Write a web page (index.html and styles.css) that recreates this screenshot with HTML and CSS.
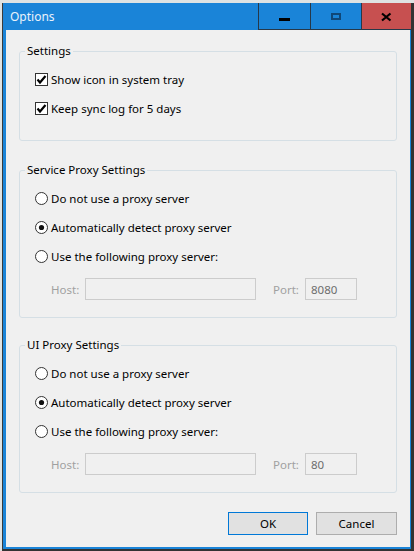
FILE: index.html
```html
<!DOCTYPE html>
<html lang="en">
<head>
    <meta charset="UTF-8">
    <meta name="viewport" content="width=device-width, initial-scale=1.0">
    <title>Options</title>
    <link rel="stylesheet" href="styles.css">
</head>
<body>
    <div class="window">
        <div class="titlebar">
            <span class="title">Options</span>
            <div class="caption-buttons">
                <span class="cap-btn cap-min">
                    <svg width="51" height="26" viewBox="0 0 51 26"><rect x="20" y="15" width="11" height="3" fill="#000"/></svg>
                </span>
                <span class="cap-btn cap-max">
                    <svg width="50" height="26" viewBox="0 0 50 26"><rect x="21" y="11" width="8" height="5" fill="none" stroke="#0f4778" stroke-width="2"/></svg>
                </span>
                <span class="cap-btn cap-close">
                    <svg width="49" height="26" viewBox="0 0 49 26"><path d="M20 10.5 L28.5 17.5 M28.5 10.5 L20 17.5" stroke="#000" stroke-width="2.2"/></svg>
                </span>
            </div>
        </div>

        <div class="client">
            <fieldset class="group">
                <legend>Settings</legend>
                <label class="option">
                    <span class="check"><svg width="13" height="13" viewBox="0 0 13 13"><rect x="0.5" y="0.5" width="12" height="12" fill="#fff" stroke="#333"/><path d="M2.5 6.5 L5 9.5 L10.5 3" fill="none" stroke="#000" stroke-width="2.2"/></svg></span>
                    Show icon in system tray
                </label>
                <label class="option">
                    <span class="check"><svg width="13" height="13" viewBox="0 0 13 13"><rect x="0.5" y="0.5" width="12" height="12" fill="#fff" stroke="#333"/><path d="M2.5 6.5 L5 9.5 L10.5 3" fill="none" stroke="#000" stroke-width="2.2"/></svg></span>
                    Keep sync log for 5 days
                </label>
            </fieldset>

            <fieldset class="group proxy">
                <legend>Service Proxy Settings</legend>
                <label class="option">
                    <span class="radio"><svg width="13" height="13" viewBox="0 0 13 13"><circle cx="6.5" cy="6.5" r="6" fill="#fff" stroke="#333"/></svg></span>
                    Do not use a proxy server
                </label>
                <label class="option">
                    <span class="radio"><svg width="13" height="13" viewBox="0 0 13 13"><circle cx="6.5" cy="6.5" r="6" fill="#fff" stroke="#333"/><circle cx="6.5" cy="6.5" r="2.6" fill="#111"/></svg></span>
                    Automatically detect proxy server
                </label>
                <label class="option">
                    <span class="radio"><svg width="13" height="13" viewBox="0 0 13 13"><circle cx="6.5" cy="6.5" r="6" fill="#fff" stroke="#333"/></svg></span>
                    Use the following proxy server:
                </label>
                <div class="host-row">
                    <span class="field-label">Host:</span>
                    <input class="field host" type="text" value="" disabled>
                    <span class="field-label port-label">Port:</span>
                    <input class="field port" type="text" value="8080" disabled>
                </div>
            </fieldset>

            <fieldset class="group proxy ui-proxy">
                <legend>UI Proxy Settings</legend>
                <label class="option">
                    <span class="radio"><svg width="13" height="13" viewBox="0 0 13 13"><circle cx="6.5" cy="6.5" r="6" fill="#fff" stroke="#333"/></svg></span>
                    Do not use a proxy server
                </label>
                <label class="option">
                    <span class="radio"><svg width="13" height="13" viewBox="0 0 13 13"><circle cx="6.5" cy="6.5" r="6" fill="#fff" stroke="#333"/><circle cx="6.5" cy="6.5" r="2.6" fill="#111"/></svg></span>
                    Automatically detect proxy server
                </label>
                <label class="option">
                    <span class="radio"><svg width="13" height="13" viewBox="0 0 13 13"><circle cx="6.5" cy="6.5" r="6" fill="#fff" stroke="#333"/></svg></span>
                    Use the following proxy server:
                </label>
                <div class="host-row">
                    <span class="field-label">Host:</span>
                    <input class="field host" type="text" value="" disabled>
                    <span class="field-label port-label">Port:</span>
                    <input class="field port" type="text" value="80" disabled>
                </div>
            </fieldset>

            <div class="actions">
                <button class="btn btn-default">OK</button>
                <button class="btn btn-cancel">Cancel</button>
            </div>
        </div>
    </div>
</body>
</html>
```

FILE: styles.css
```css
body {
    margin: 0;
    padding: 0;
    background-color: #dfe3e3;
    font-family: "Noto Sans", "Open Sans", sans-serif;
    font-size: 11.5px;
    color: #000;
    overflow: hidden;
}
.window {
    margin: 3px 0 0 2px;
    width: 408px;
    padding-bottom: 2px;
    background-color: #1a84d8;
    border-left: 1px solid #3b3b3b;
    border-right: 3px solid #333;
    border-bottom: 2px solid #333;
}
.titlebar {
    height: 27px;
    display: flex;
    align-items: center;
    justify-content: space-between;
}
.title {
    padding-left: 7px;
    color: #eaf2fb;
    font-size: 12px;
    line-height: 16px;
}
.caption-buttons {
    display: flex;
    align-self: stretch;
}
.cap-btn {
    display: block;
    height: 26px;
    border-left: 1px solid #263849;
    border-bottom: 1px solid #263849;
}
.cap-btn svg {
    display: block;
}
.cap-close {
    background-color: #c75050;
}
.client {
    margin: 0 1px 0 3px;
    height: 517px;
    box-sizing: border-box;
    padding: 13px 13px 0 13px;
    background-color: #f0f0f0;
}
.group {
    margin: 0;
    min-width: 0;
    padding: 6px 15px 17px 5px;
    border: 1px solid #d5dfe5;
    border-radius: 3px;
}
.group + .group {
    margin-top: 21px;
}
.group.ui-proxy {
    margin-top: 19px;
}
legend {
    padding: 0 2px;
    line-height: 16px;
}
.option {
    display: flex;
    align-items: center;
    gap: 3px;
    height: 29px;
    margin-left: 10px;
}
.check, .radio {
    display: block;
    width: 13px;
    height: 13px;
}
.check svg, .radio svg {
    display: block;
}
.host-row {
    display: flex;
    align-items: center;
    margin: 7px 0 0 26px;
}
.field-label {
    width: 34px;
    color: #a0a0a0;
}
.port-label {
    width: 32px;
    margin-left: 17px;
}
.field {
    box-sizing: border-box;
    height: 22px;
    margin: 0;
    padding: 0 5px;
    border: 1px solid #cccccc;
    background-color: #f0f0f0;
    font-family: inherit;
    font-size: 11.5px;
    color: #6d6d6d;
}
.field.host {
    width: 171px;
}
.field.port {
    width: 52px;
}
.actions {
    display: flex;
    justify-content: flex-end;
    gap: 8px;
    margin-top: 19px;
}
.btn {
    height: 23px;
    margin: 0;
    padding: 0;
    border: 1px solid #adadad;
    background-color: #e1e1e1;
    font-family: inherit;
    font-size: 11.5px;
    color: #000;
}
.btn-default {
    width: 80px;
    border-color: #0078d7;
}
.btn-cancel {
    width: 81px;
}
```
